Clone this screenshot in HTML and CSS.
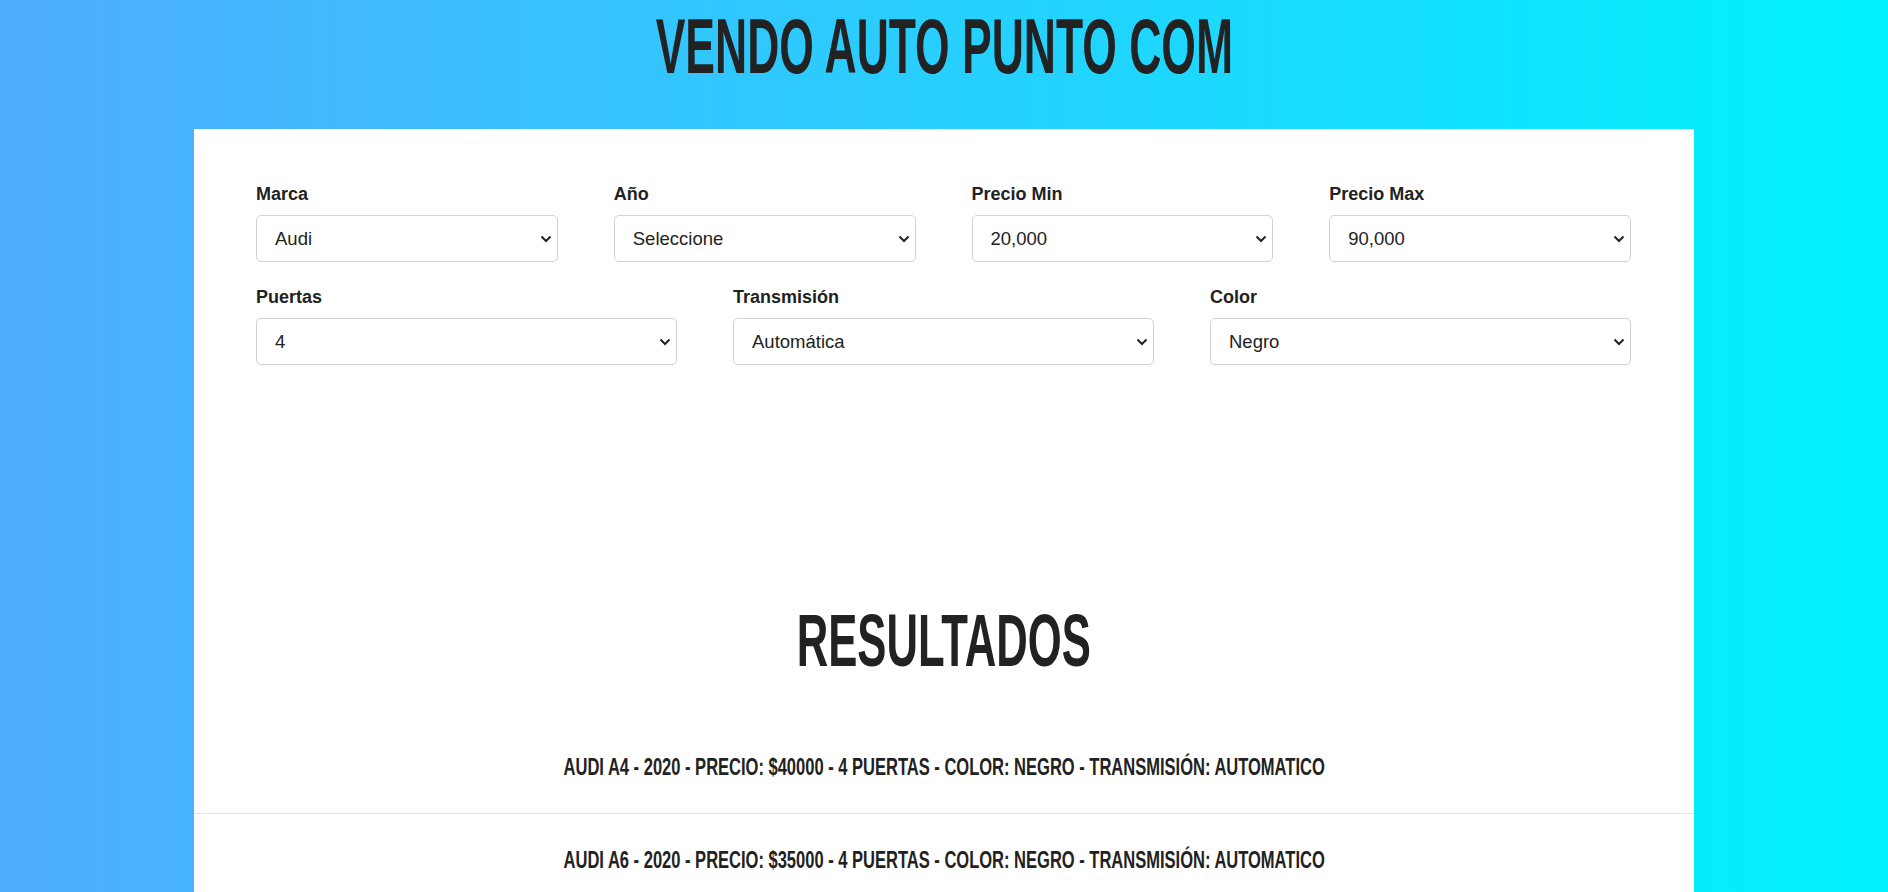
FILE: index.html
```html
<!DOCTYPE html>
<html lang="es">
<head>
<meta charset="utf-8">
<title>Vendo Auto Punto Com</title>
<link rel="stylesheet" href="styles.css">
</head>
<body>
<header class="header">
  <h1 class="title"><span class="condensed title-text">Vendo Auto Punto Com</span></h1>
</header>
<main class="card">
  <form class="filters">
    <div class="row row-4">
      <div class="field">
        <label class="label" for="marca">Marca</label>
        <div class="select-wrap">
          <select id="marca" class="select"><option>Audi</option></select>
          <svg class="chev" width="12" height="8" viewBox="0 0 12 8"><path d="M1.5 1.5 L6 6 L10.5 1.5" fill="none" stroke="#222" stroke-width="2"/></svg>
        </div>
      </div>
      <div class="field">
        <label class="label" for="anio">Año</label>
        <div class="select-wrap">
          <select id="anio" class="select"><option>Seleccione</option></select>
          <svg class="chev" width="12" height="8" viewBox="0 0 12 8"><path d="M1.5 1.5 L6 6 L10.5 1.5" fill="none" stroke="#222" stroke-width="2"/></svg>
        </div>
      </div>
      <div class="field">
        <label class="label" for="pmin">Precio Min</label>
        <div class="select-wrap">
          <select id="pmin" class="select"><option>20,000</option></select>
          <svg class="chev" width="12" height="8" viewBox="0 0 12 8"><path d="M1.5 1.5 L6 6 L10.5 1.5" fill="none" stroke="#222" stroke-width="2"/></svg>
        </div>
      </div>
      <div class="field">
        <label class="label" for="pmax">Precio Max</label>
        <div class="select-wrap">
          <select id="pmax" class="select"><option>90,000</option></select>
          <svg class="chev" width="12" height="8" viewBox="0 0 12 8"><path d="M1.5 1.5 L6 6 L10.5 1.5" fill="none" stroke="#222" stroke-width="2"/></svg>
        </div>
      </div>
    </div>
    <div class="row row-3">
      <div class="field">
        <label class="label" for="puertas">Puertas</label>
        <div class="select-wrap">
          <select id="puertas" class="select"><option>4</option></select>
          <svg class="chev" width="12" height="8" viewBox="0 0 12 8"><path d="M1.5 1.5 L6 6 L10.5 1.5" fill="none" stroke="#222" stroke-width="2"/></svg>
        </div>
      </div>
      <div class="field">
        <label class="label" for="trans">Transmisión</label>
        <div class="select-wrap">
          <select id="trans" class="select"><option>Automática</option></select>
          <svg class="chev" width="12" height="8" viewBox="0 0 12 8"><path d="M1.5 1.5 L6 6 L10.5 1.5" fill="none" stroke="#222" stroke-width="2"/></svg>
        </div>
      </div>
      <div class="field">
        <label class="label" for="color">Color</label>
        <div class="select-wrap">
          <select id="color" class="select"><option>Negro</option></select>
          <svg class="chev" width="12" height="8" viewBox="0 0 12 8"><path d="M1.5 1.5 L6 6 L10.5 1.5" fill="none" stroke="#222" stroke-width="2"/></svg>
        </div>
      </div>
    </div>
  </form>

  <h2 class="results-title"><span class="condensed results-title-text">Resultados</span></h2>

  <ul class="results">
    <li class="result"><span class="condensed result-text">Audi A4 - 2020 - Precio: $40000 - 4 Puertas - Color: Negro - Transmisión: automatico</span></li>
    <li class="result"><span class="condensed result-text">Audi A6 - 2020 - Precio: $35000 - 4 Puertas - Color: Negro - Transmisión: automatico</span></li>
  </ul>
</main>
</body>
</html>
```

FILE: styles.css
```css
* { box-sizing: border-box; }

html, body {
  margin: 0;
  padding: 0;
}

body {
  min-height: 892px;
  background: linear-gradient(to right, #4facfe 0%, #00f2fe 100%);
  font-family: "Liberation Sans", Arial, sans-serif;
  color: #222;
}

.header {
  text-align: center;
}

.condensed {
  display: inline-block;
  font-family: "Liberation Sans", Arial, sans-serif;
  font-weight: 700;
  text-transform: uppercase;
  white-space: nowrap;
  transform-origin: center center;
}

.title {
  margin: 0;
  padding: 7px 0 44px;
  font-size: 78px;
  line-height: 78px;
  font-weight: 700;
  color: #222;
}

.title-text {
  transform: scaleX(0.57);
}

.card {
  width: 1500px;
  margin: 0 auto;
  background: #fff;
  padding: 55px 0 0;
  min-height: 763px;
}

.filters {
  padding: 0 63px 0 62px;
}

.row {
  display: grid;
  column-gap: 56px;
}

.row-4 {
  grid-template-columns: repeat(4, 1fr);
}

.row-3 {
  grid-template-columns: repeat(3, 1fr);
  margin-top: 25px;
}

.label {
  display: block;
  font-size: 18px;
  line-height: 21px;
  font-weight: 700;
  color: #222;
  margin-bottom: 10px;
}

.select-wrap {
  position: relative;
}

.select {
  display: block;
  width: 100%;
  height: 47px;
  -webkit-appearance: none;
  appearance: none;
  background: #fff;
  border: 1px solid #d2d2d2;
  border-radius: 5px;
  padding: 0 30px 0 18px;
  font-family: "Liberation Sans", Arial, sans-serif;
  font-size: 18.5px;
  color: #222;
}

.chev {
  position: absolute;
  right: 6px;
  top: 20px;
  pointer-events: none;
}

.results-title {
  margin: 238px 0 0;
  text-align: center;
  font-size: 75px;
  line-height: 75px;
  color: #222;
}

.results-title-text {
  transform: scaleX(0.582);
}

.results {
  list-style: none;
  margin: 43px 0 0;
  padding: 0;
}

.result {
  text-align: center;
  padding: 34px 0;
  line-height: 24px;
  font-size: 24px;
  border-bottom: 1px solid #e3e3e3;
  color: #222;
}

.result-text {
  transform: scaleX(0.688);
}
```
